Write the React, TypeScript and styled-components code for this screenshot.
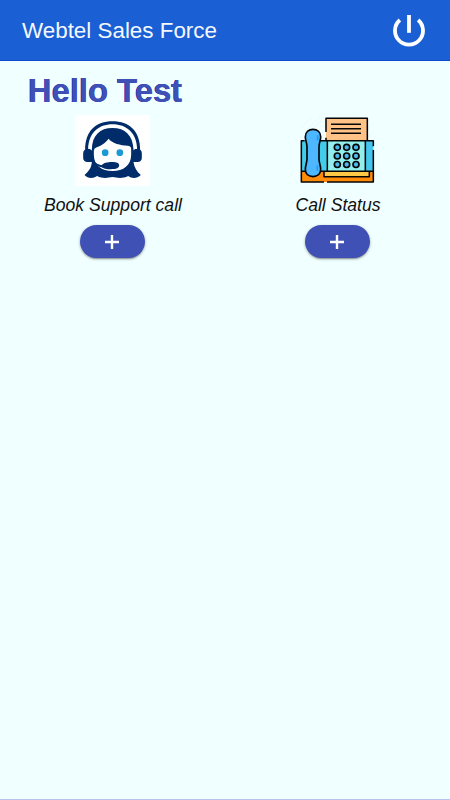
import React from "react";
import styled, { createGlobalStyle } from "styled-components";

const GlobalStyle = createGlobalStyle`
  *, *::before, *::after { box-sizing: border-box; }
  body {
    margin: 0;
    background: #f0ffff;
    font-family: "Liberation Sans", Arial, sans-serif;
  }
`;

const Screen = styled.div`
  display: flex;
  flex-direction: column;
  height: 100vh;
  overflow: hidden;
  background: #f0ffff;
  border-bottom: 1px solid #b9c4ee;
`;

const Toolbar = styled.header`
  display: flex;
  align-items: center;
  justify-content: space-between;
  flex: none;
  height: 61px;
  padding: 2px 25px 0 22px;
  background: #1a5fd3;
  border-bottom: 1px solid #0b48cf;
`;

const Title = styled.h1`
  margin: 0;
  color: #f4f8ff;
  font-size: 22.4px;
  font-weight: 400;
  line-height: 26px;
  white-space: nowrap;
`;

const PowerButton = styled.button`
  display: flex;
  padding: 0;
  border: 0;
  background: none;
`;

const Greeting = styled.h2`
  margin: 11px 0 0 28px;
  color: #3f51b5;
  font-size: 32.8px;
  font-weight: 700;
  line-height: 38px;
  text-shadow: -0.5px -0.5px 0 #0a0aa8;
`;

const Actions = styled.main`
  display: grid;
  grid-template-columns: 1fr 1fr;
  margin-top: 5px;
`;

const Action = styled.section`
  display: flex;
  flex-direction: column;
  align-items: center;
`;

const Picture = styled.svg`
  display: block;
  width: 75px;
  height: 71px;
`;

const Label = styled.p`
  margin: 9px 0 10px;
  padding-left: 1px;
  color: #111;
  font-size: 17.6px;
  font-style: italic;
  line-height: 20px;
  white-space: nowrap;
`;

const AddButton = styled.button`
  display: flex;
  align-items: center;
  justify-content: center;
  width: 65px;
  height: 33px;
  padding: 0 1px 0 0;
  border: 0;
  border-radius: 17px;
  background: #3f51b5;
  box-shadow: 0 2px 1px -1px rgba(0, 0, 0, 0.2), 0 1px 3px rgba(0, 0, 0, 0.35);
`;

function PowerIcon() {
  return (
    <svg width="32" height="32" viewBox="0 0 32 32" fill="none" stroke="#fff" strokeWidth="3.8">
      <path d="M16 0v17.8" />
      <path d="M6.9 5A14 14 0 1 0 25.1 5" />
    </svg>
  );
}

function PlusIcon() {
  return (
    <svg width="14" height="14" viewBox="0 0 14 14" stroke="#fff" strokeWidth="2.4">
      <path d="M7 0v14M0 7h14" />
    </svg>
  );
}

function SupportPicture() {
  return (
    <Picture viewBox="-13.5 -9 225 213">
      <rect x="-13.5" y="-9" width="225" height="213" fill="#fff" />
      <g fill="#002d69">
        <path d="M17 96C17 39 49 10 99 10S182 39 182 96H173C173 45 141 19 99 19S26 45 26 96Z" />
        <path d="M37 94C38 52 61 30 99 30S160 52 162 94V132C164 148 171 160 184 171C173 182 157 182 146 174C130 182 114 180 99 177C84 180 68 182 53 174C41 182 25 182 15 171C29 159 36 148 37 132Z" />
        <path d="M31 93H22Q11 95 11 107V119Q11 131 24 132H38V98Z" />
        <path d="M167 93H176Q187 95 187 107V119Q187 131 174 132H160V98Z" />
      </g>
      <path
        d="M87 62C99 76 123 82 144 83Q155 84 155 92V110C155 141 132 159 99 159C66 159 43 141 43 110V98Q43 91 52 88C68 81 78 75 87 62Z"
        fill="#fff"
      />
      <path d="M35 124C44 139 57 145 76 146" fill="none" stroke="#002d69" strokeWidth="6" />
      <path d="M66 143C70 135 84 132 98 132C112 132 119 135 119 142C119 151 109 154 98 153C84 155 64 151 66 143Z" fill="#002d69" />
      <circle cx="77" cy="104" r="10" fill="#1b9bd1" />
      <circle cx="121" cy="104" r="10" fill="#1b9bd1" />
    </Picture>
  );
}

const KEY_ROWS = [112, 138, 163.5];
const KEY_COLUMNS = [142, 170, 198];

function FaxPicture() {
  return (
    <Picture viewBox="30 15 225 213">
      <g stroke="#e2eeee" strokeWidth="1.5">
        <path d="M32 54L68 18M48 62L92 18M70 54L106 18M230 60L252 38M232 83L252 63" />
      </g>
      <path d="M33 178H250V216H33Z" fill="#ff8b08" />
      <path d="M34 92H112V184H34Z" fill="#43cce9" />
      <path d="M112 92H226V184H112Z" fill="#91eeed" />
      <path d="M226 92H250V184H226Z" fill="#43c5ee" />
      <path d="M108 25H232V91H108Z" fill="#ffc287" />
      <path d="M102 183H238V200H102Z" fill="#ffc846" />
      <g fill="none" stroke="#050505" strokeWidth="4.6" strokeLinejoin="round">
        <path d="M108 66V25H232V91M108 83V91" />
        <path d="M44 92H34V216H102M111 216H250V120M250 109V92H90" />
        <path d="M34 184H250M112 92V184M226 92V184M102 184V200H238V184" />
        <path d="M123 43H213M123 56H213M123 70H213" />
      </g>
      <path
        d="M46 80C46 66 56 58 69 58C82 58 92 66 92 80C92 93 87 98 87 110V147C87 159 92 165 92 178C92 192 82 200 69 200C56 200 46 192 46 178C46 165 51 159 51 147V110C51 98 46 93 46 80Z"
        fill="#4db8ff"
        stroke="#050505"
        strokeWidth="5"
      />
      <path d="M83 76V92M82 166V182" stroke="#259bea" strokeWidth="5" />
      <g fill="#4cb9ee" stroke="#050505" strokeWidth="5">
        {KEY_ROWS.map((cy) =>
          KEY_COLUMNS.map((cx) => <circle key={`${cx}-${cy}`} cx={cx} cy={cy} r="9" />),
        )}
      </g>
      <path d="M119 110L134 95M116 180L130 166M211 118L223 106" stroke="#c1f5f4" strokeWidth="1.5" />
    </Picture>
  );
}

export default function App() {
  return (
    <>
      <GlobalStyle />
      <Screen>
        <Toolbar>
          <Title>Webtel Sales Force</Title>
          <PowerButton aria-label="Log out">
            <PowerIcon />
          </PowerButton>
        </Toolbar>
        <Greeting>Hello Test</Greeting>
        <Actions>
          <Action>
            <SupportPicture />
            <Label>Book Support call</Label>
            <AddButton aria-label="Book a support call">
              <PlusIcon />
            </AddButton>
          </Action>
          <Action>
            <FaxPicture />
            <Label>Call Status</Label>
            <AddButton aria-label="Open call status">
              <PlusIcon />
            </AddButton>
          </Action>
        </Actions>
      </Screen>
    </>
  );
}
